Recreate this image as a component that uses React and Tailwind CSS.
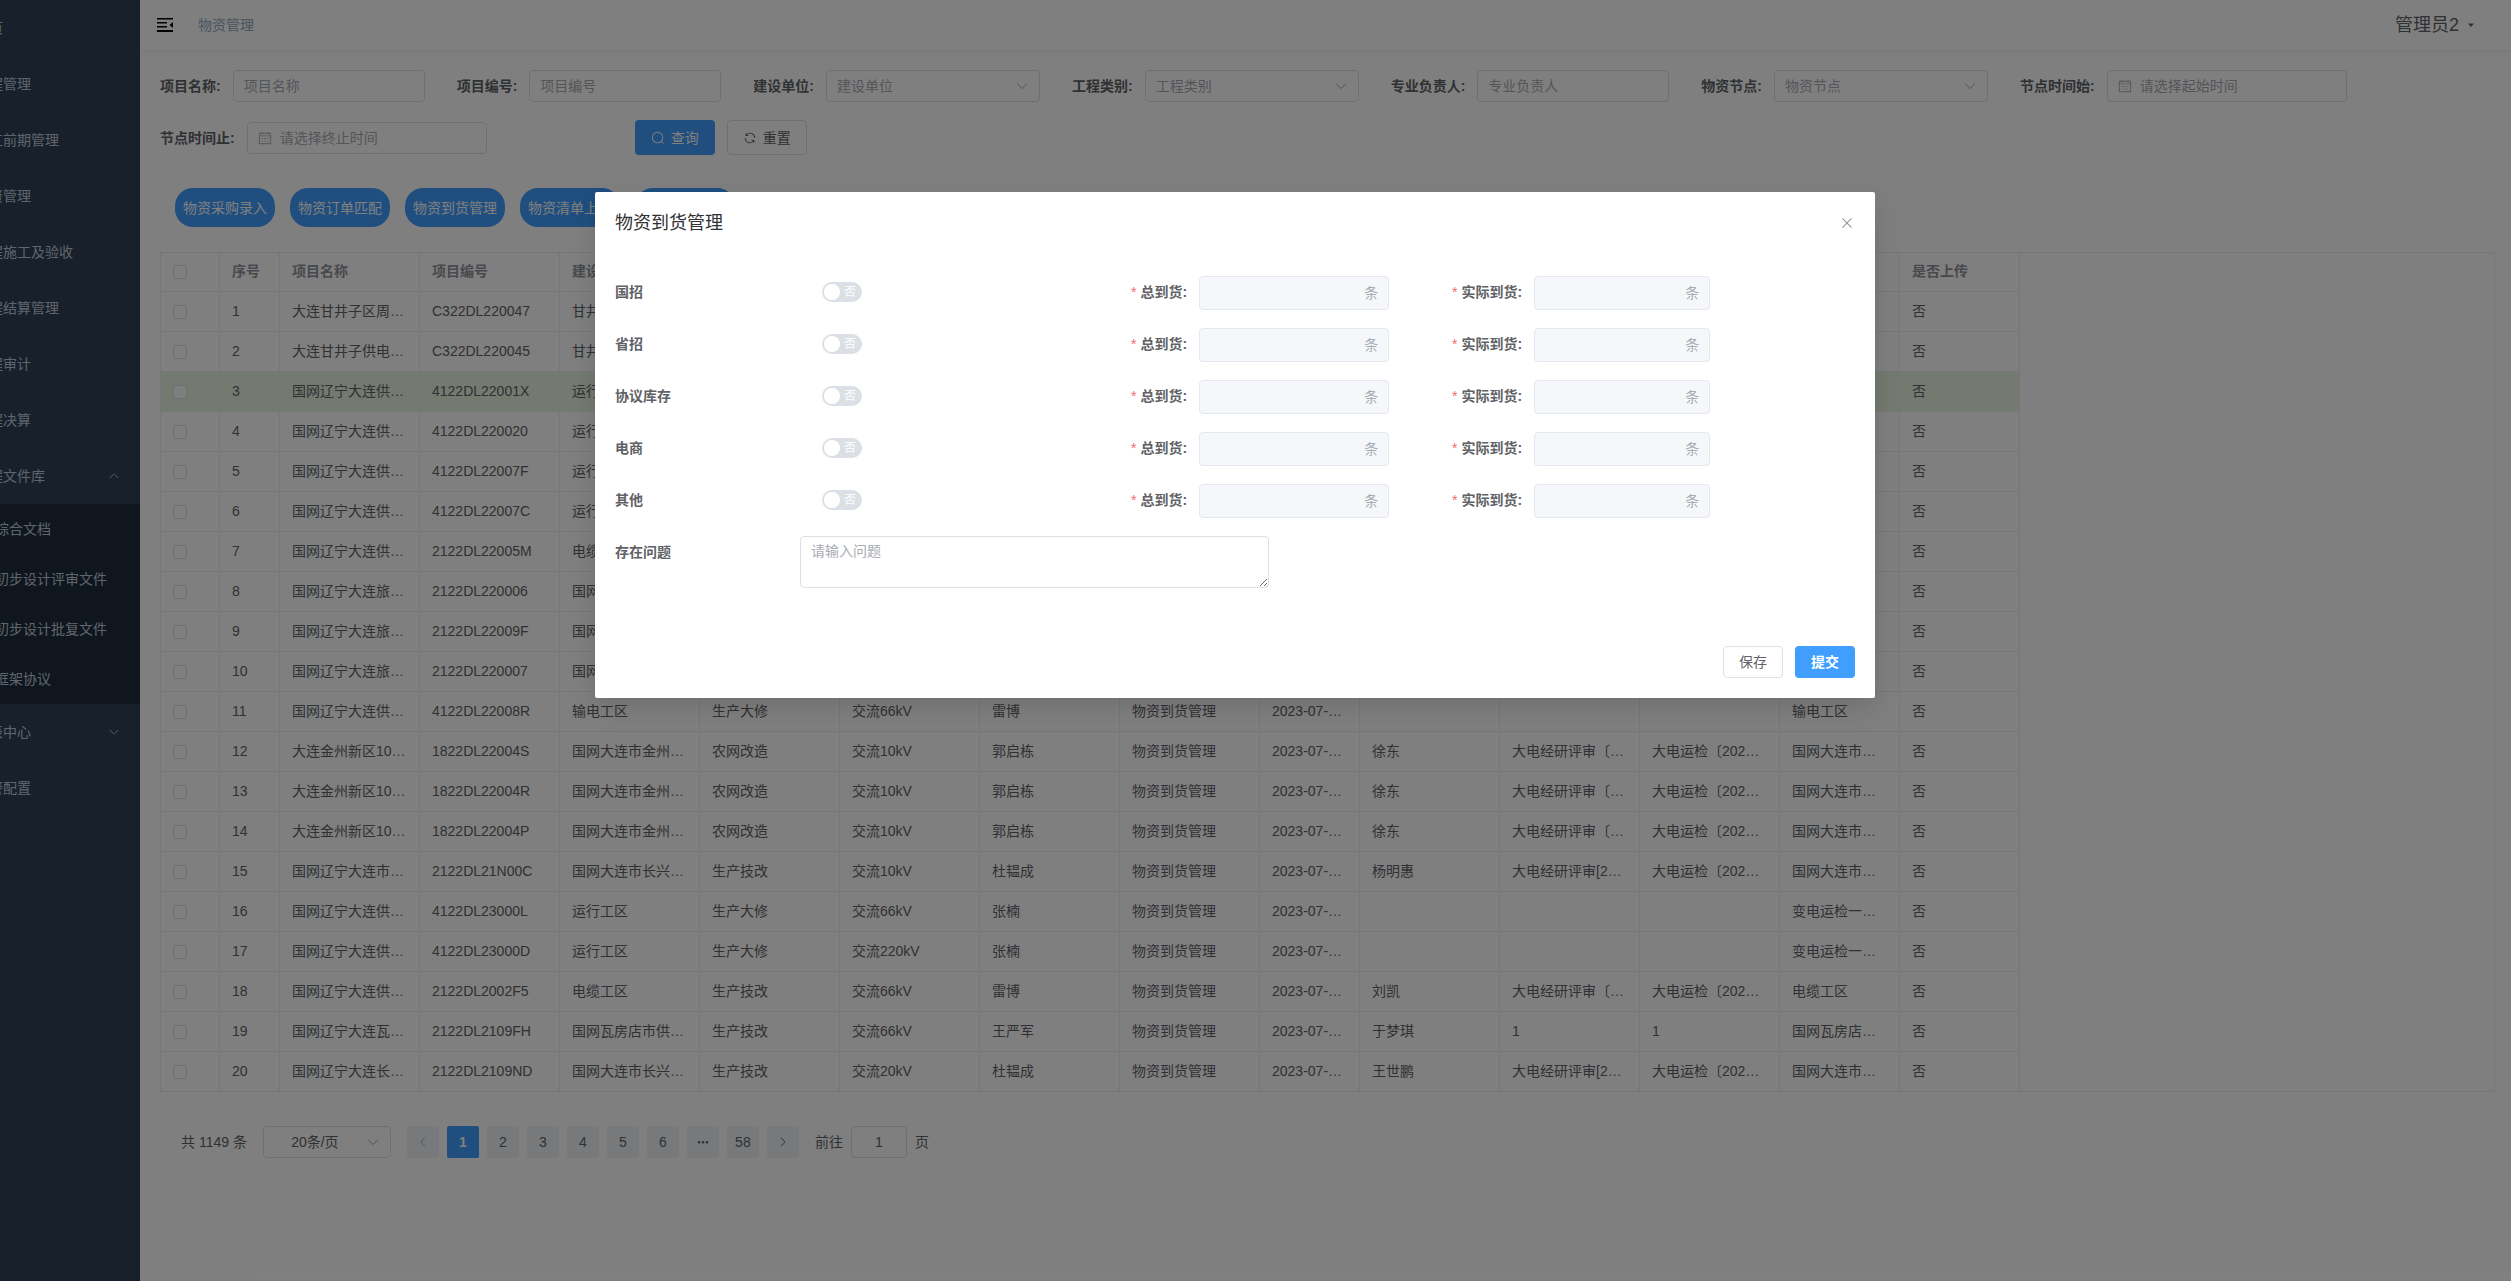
import React from "react";

const CALENDAR =
  "M128 384v512h768V192H768v32a32 32 0 1 1-64 0v-32H320v32a32 32 0 0 1-64 0v-32H128v128h768v64H128zm192-256h384V96a32 32 0 1 1 64 0v32h160a32 32 0 0 1 32 32v768a32 32 0 0 1-32 32H96a32 32 0 0 1-32-32V160a32 32 0 0 1 32-32h160V96a32 32 0 0 1 64 0v32zm-32 384h64a32 32 0 0 1 0 64h-64a32 32 0 0 1 0-64zm0 192h64a32 32 0 1 1 0 64h-64a32 32 0 1 1 0-64zm192-192h64a32 32 0 0 1 0 64h-64a32 32 0 0 1 0-64zm0 192h64a32 32 0 1 1 0 64h-64a32 32 0 1 1 0-64zm192-192h64a32 32 0 1 1 0 64h-64a32 32 0 1 1 0-64zm0 192h64a32 32 0 1 1 0 64h-64a32 32 0 1 1 0-64z";
const SEARCH =
  "m795.904 750.72 124.992 124.928a32 32 0 0 1-45.248 45.248L750.656 795.904a416 416 0 1 1 45.248-45.248zM480 832a352 352 0 1 0 0-704 352 352 0 0 0 0 704z";
const REFRESH =
  "M771.776 794.88A384 384 0 0 1 128 512h64a320 320 0 0 0 555.712 216.448H654.72a32 32 0 1 1 0-64h149.056a32 32 0 0 1 32 32v148.928a32 32 0 1 1-64 0v-50.56zM276.288 295.616h92.992a32 32 0 0 1 0 64H220.16a32 32 0 0 1-32-32V178.56a32 32 0 0 1 64 0v50.56A384 384 0 0 1 896.128 512h-64a320 320 0 0 0-555.776-216.384z";
const ARROW_DOWN =
  "M831.872 340.864 512 652.672 192.128 340.864a30.592 30.592 0 0 0-42.752 0 29.12 29.12 0 0 0 0 41.6L489.664 714.24a32 32 0 0 0 44.672 0l340.288-331.712a29.12 29.12 0 0 0 0-41.728 30.592 30.592 0 0 0-42.752 0z";
const CLOSE =
  "M764.288 214.592 512 466.88 259.712 214.592a31.936 31.936 0 0 0-45.12 45.12L466.752 512 214.528 764.224a31.936 31.936 0 1 0 45.12 45.184L512 557.184l252.288 252.288a31.936 31.936 0 0 0 45.12-45.12L557.12 512.064l252.288-252.352a31.936 31.936 0 1 0-45.12-45.184z";
const CARET = "m256 384 256 288 256-288z";
const MORE =
  "M176 416a112 112 0 1 1 0 224 112 112 0 0 1 0-224m336 0a112 112 0 1 1 0 224 112 112 0 0 1 0-224m336 0a112 112 0 1 1 0 224 112 112 0 0 1 0-224";

function Icon({ d, className }) {
  return (
    <svg viewBox="0 0 1024 1024" fill="currentColor" aria-hidden="true" className={className}>
      <path d={d} />
    </svg>
  );
}

function SideLink({ text, children }) {
  return (
    <a href="#" className="flex h-14 items-center justify-between px-5 whitespace-nowrap">
      {text}
      {children}
    </a>
  );
}

function Sidebar() {
  const top = ["首页", "工程管理", "开工前期管理", "物资管理", "工程施工及验收", "工程结算管理", "工程审计", "工程决算"];
  const sub = ["综合文档", "初步设计评审文件", "初步设计批复文件", "框架协议"];
  return (
    <aside className="w-35 shrink-0 overflow-hidden bg-[#304156] text-[#bfcbd9]">
      <nav className="-ml-[45px] w-[185px]">
        {top.map((t) => (
          <SideLink key={t} text={t} />
        ))}
        <SideLink text="工程文件库">
          <Icon d={ARROW_DOWN} className="size-3 rotate-180" />
        </SideLink>
        <div className="bg-[#1f2d3d]">
          {sub.map((t) => (
            <a key={t} href="#" className="flex h-[50px] items-center pl-10 whitespace-nowrap">
              {t}
            </a>
          ))}
        </div>
        <SideLink text="报表中心">
          <Icon d={ARROW_DOWN} className="size-3" />
        </SideLink>
        <SideLink text="告警配置" />
      </nav>
    </aside>
  );
}

function Field({ id, label, kind, placeholder }) {
  const box = "h-8 rounded border border-[#dcdfe6] bg-white placeholder:text-[#a8abb2]";
  return (
    <div className="flex items-center gap-3">
      <label htmlFor={id} className="font-bold">
        {label}:
      </label>
      {kind === "text" && <input id={id} placeholder={placeholder} className={box + " w-48 px-2.5"} />}
      {kind === "select" && (
        <div className="relative">
          <select id={id} className={box + " w-[214px] appearance-none px-2.5 text-[#a8abb2]"}>
            <option>{placeholder}</option>
          </select>
          <Icon d={ARROW_DOWN} className="pointer-events-none absolute top-[9px] right-[11px] size-3.5 text-[#a8abb2]" />
        </div>
      )}
      {kind === "date" && (
        <div className="relative">
          <input id={id} placeholder={placeholder} className={box + " w-60 pr-[11px] pl-8"} />
          <Icon d={CALENDAR} className="pointer-events-none absolute top-[9px] left-[11px] size-3.5 text-[#a8abb2]" />
        </div>
      )}
    </div>
  );
}

function Filters() {
  return (
    <form className="flex flex-wrap items-center gap-x-8 gap-y-[18px]">
      <Field id="f-name" label="项目名称" kind="text" placeholder="项目名称" />
      <Field id="f-code" label="项目编号" kind="text" placeholder="项目编号" />
      <Field id="f-unit" label="建设单位" kind="select" placeholder="建设单位" />
      <Field id="f-type" label="工程类别" kind="select" placeholder="工程类别" />
      <Field id="f-owner" label="专业负责人" kind="text" placeholder="专业负责人" />
      <Field id="f-node" label="物资节点" kind="select" placeholder="物资节点" />
      <Field id="f-from" label="节点时间始" kind="date" placeholder="请选择起始时间" />
      <Field id="f-to" label="节点时间止" kind="date" placeholder="请选择终止时间" />
      <div className="ml-[116px] flex gap-3">
        <button type="button" className="flex h-[35px] w-20 items-center justify-center gap-1.5 rounded bg-[#409eff] text-white">
          <Icon d={SEARCH} className="size-3.5" />
          查询
        </button>
        <button type="button" className="flex h-[35px] w-20 items-center justify-center gap-1.5 rounded border border-[#dcdfe6]">
          <Icon d={REFRESH} className="size-3.5" />
          重置
        </button>
      </div>
    </form>
  );
}

const HEADERS = [
  "序号", "项目名称", "项目编号", "建设单位", "专业类别", "工程类别", "专业负责人", "物资节点",
  "节点时间", "项目负责人", "评审文号", "批复文号", "申报单位", "是否上传",
];
const WIDTHS = [59, 60, 140, 140, 140, 140, 140, 140, 140, 100, 140, 140, 140, 120, 120];
const JZ = "国网大连市金州…";
const CX = "国网大连市长兴…";
const DL = "国网大连市…";
const GW = "国网辽宁大连供…";
const LS = "国网辽宁大连旅…";
const JZN = "大连金州新区10…";
const PS = "大电经研评审〔…";
const PS2 = "大电经研评审[2…";
const YJ = "大电运检〔202…";
const NODE = "物资到货管理";
const DATE = "2023-07-…";
const brief = (name, code, unit) => [name, code, unit, "", "", "", "", "", "", "", "", ""];
const ROWS = [
  brief("大连甘井子区周…", "C322DL220047", "甘井子"),
  brief("大连甘井子供电…", "C322DL220045", "甘井子"),
  brief(GW, "4122DL22001X", "运行工区"),
  brief(GW, "4122DL220020", "运行工区"),
  brief(GW, "4122DL22007F", "运行工区"),
  brief(GW, "4122DL22007C", "运行工区"),
  brief(GW, "2122DL22005M", "电缆工区"),
  brief(LS, "2122DL220006", DL),
  brief(LS, "2122DL22009F", DL),
  brief(LS, "2122DL220007", DL),
  [GW, "4122DL22008R", "输电工区", "生产大修", "交流66kV", "雷博", NODE, DATE, "", "", "", "输电工区"],
  [JZN, "1822DL22004S", JZ, "农网改造", "交流10kV", "郭启栋", NODE, DATE, "徐东", PS, YJ, DL],
  [JZN, "1822DL22004R", JZ, "农网改造", "交流10kV", "郭启栋", NODE, DATE, "徐东", PS, YJ, DL],
  [JZN, "1822DL22004P", JZ, "农网改造", "交流10kV", "郭启栋", NODE, DATE, "徐东", PS, YJ, DL],
  ["国网辽宁大连市…", "2122DL21N00C", CX, "生产技改", "交流10kV", "杜韫成", NODE, DATE, "杨明惠", PS2, YJ, DL],
  [GW, "4122DL23000L", "运行工区", "生产大修", "交流66kV", "张楠", NODE, DATE, "", "", "", "变电运检一…"],
  [GW, "4122DL23000D", "运行工区", "生产大修", "交流220kV", "张楠", NODE, DATE, "", "", "", "变电运检一…"],
  [GW, "2122DL2002F5", "电缆工区", "生产技改", "交流66kV", "雷博", NODE, DATE, "刘凯", PS, YJ, "电缆工区"],
  ["国网辽宁大连瓦…", "2122DL2109FH", "国网瓦房店市供…", "生产技改", "交流66kV", "王严军", NODE, DATE, "于梦琪", "1", "1", "国网瓦房店…"],
  ["国网辽宁大连长…", "2122DL2109ND", CX, "生产技改", "交流20kV", "杜韫成", NODE, DATE, "王世鹏", PS2, YJ, DL],
];

function Tick({ label }) {
  return (
    <input
      type="checkbox"
      aria-label={label}
      className="block size-3.5 appearance-none rounded-xs border border-[#dcdfe6] bg-white"
    />
  );
}

function DataTable() {
  return (
    <div className="border border-[#ebeef5]">
      <table className="w-[1859px] table-fixed border-separate border-spacing-0">
        <colgroup>
          {WIDTHS.map((w, i) => (
            <col key={i} style={{ width: w }} />
          ))}
        </colgroup>
        <thead className="text-left text-[#909399]">
          <tr>
            <th className="h-[39px] border-r border-b border-[#ebeef5] px-3">
              <Tick label="全选" />
            </th>
            {HEADERS.map((h) => (
              <th key={h} className="h-[39px] truncate border-r border-b border-[#ebeef5] px-3 pb-0.5 font-bold">
                {h}
              </th>
            ))}
          </tr>
        </thead>
        <tbody className="[&>tr:last-child>td]:h-[39px] [&>tr:last-child>td]:border-b-0">
          {ROWS.map((row, r) => (
            <tr key={r} className={r === 2 ? "bg-[#e9f5e1]" : ""}>
              <td className="h-10 border-r border-b border-[#ebeef5] px-3">
                <Tick label={"选择第" + (r + 1) + "行"} />
              </td>
              {[r + 1, ...row, "否"].map((c, i) => (
                <td key={i} className="h-10 truncate border-r border-b border-[#ebeef5] px-3 pb-0.5">
                  {c}
                </td>
              ))}
            </tr>
          ))}
        </tbody>
      </table>
    </div>
  );
}

function Pagination() {
  const btn = "flex size-8 items-center justify-center rounded-xs bg-[#f0f2f5]";
  return (
    <div className="mt-[34px] flex items-center px-[21px]">
      <span>共 1149 条</span>
      <div className="relative ml-4">
        <select aria-label="每页条数" className="h-8 w-32 appearance-none rounded border border-[#dcdfe6] bg-white pr-6 text-center">
          <option>20条/页</option>
        </select>
        <Icon d={ARROW_DOWN} className="pointer-events-none absolute top-[9px] right-[11px] size-3.5 text-[#a8abb2]" />
      </div>
      <div className="ml-4 flex gap-2">
        <button aria-label="上一页" className={btn + " text-[#a8abb2]"}>
          <Icon d={ARROW_DOWN} className="size-3 rotate-90" />
        </button>
        <button className="size-8 rounded-xs bg-[#409eff] font-bold text-white">1</button>
        {["2", "3", "4", "5", "6"].map((n) => (
          <button key={n} className={btn}>
            {n}
          </button>
        ))}
        <button aria-label="更多页" className={btn}>
          <Icon d={MORE} className="size-3" />
        </button>
        <button className={btn}>58</button>
        <button aria-label="下一页" className={btn}>
          <Icon d={ARROW_DOWN} className="size-3 -rotate-90" />
        </button>
      </div>
      <label htmlFor="goto" className="ml-4">
        前往
      </label>
      <input id="goto" defaultValue="1" className="mx-2 h-8 w-14 rounded border border-[#dcdfe6] bg-white text-center" />
      <span>页</span>
    </div>
  );
}

function Amount({ id, label, width }) {
  return (
    <div className="flex gap-3">
      <label htmlFor={id} className="flex h-8 items-center font-bold">
        <span className="mr-1 font-normal text-[#f56c6c]">*</span>
        {label}:
      </label>
      <div className="relative">
        <input id={id} disabled className={"block h-[34px] rounded border border-[#e4e7ed] bg-[#f5f7fa] pr-8 pl-[11px] " + width} />
        <span className="pointer-events-none absolute inset-y-0 right-[11px] flex items-center text-[#a8abb2]">条</span>
      </div>
    </div>
  );
}

function Switch({ label }) {
  return (
    <label className="relative flex h-5 w-10 items-center justify-end rounded-full bg-[#dcdfe6] pr-1.5 text-xs text-white">
      <input type="checkbox" role="switch" aria-label={label} className="absolute left-0.5 size-4 appearance-none rounded-full bg-white" />
      否
    </label>
  );
}

function Dialog() {
  const items = ["国招", "省招", "协议库存", "电商", "其他"];
  return (
    <div className="absolute inset-0 flex items-start justify-center bg-black/50 pt-48 pr-[41px]">
      <div
        role="dialog"
        aria-labelledby="dlg-title"
        className="w-[1280px] rounded-xs bg-white p-5 shadow-[0_12px_32px_4px_rgba(0,0,0,0.04),0_8px_20px_rgba(0,0,0,0.08)]"
      >
        <div className="flex items-center justify-between">
          <h2 id="dlg-title" className="text-lg leading-[22px] text-[#303133]">
            物资到货管理
          </h2>
          <button aria-label="关闭" className="text-[#909399]">
            <Icon d={CLOSE} className="size-4" />
          </button>
        </div>
        <div className="mt-[42px] flex flex-col gap-[18px]">
          {items.map((name, i) => (
            <div key={name} className="grid grid-cols-[207px_309px_321px_1fr]">
              <span className="flex h-8 items-center font-bold">{name}</span>
              <div className="flex h-8 items-center">
                <Switch label={name} />
              </div>
              <Amount id={"total-" + i} label="总到货" width="w-[190px]" />
              <Amount id={"actual-" + i} label="实际到货" width="w-44" />
            </div>
          ))}
          <div className="flex">
            <label htmlFor="issue" className="flex h-8 w-[185px] items-center font-bold">
              存在问题
            </label>
            <textarea
              id="issue"
              placeholder="请输入问题"
              className="h-[52px] w-[469px] rounded border border-[#dcdfe6] px-2.5 py-1 leading-5 placeholder:text-[#a8abb2]"
            />
          </div>
        </div>
        <div className="mt-[58px] flex justify-end gap-3">
          <button className="h-8 w-15 rounded border border-[#dcdfe6]">保存</button>
          <button className="h-8 w-15 rounded bg-[#409eff] font-bold text-white">提交</button>
        </div>
      </div>
    </div>
  );
}

export default function App() {
  const actions = ["物资采购录入", "物资订单匹配", "物资到货管理", "物资清单上传", "物资信息导出"];
  return (
    <div className="relative flex min-h-screen bg-white font-['Liberation_Sans','Noto_Sans_CJK_SC',sans-serif] text-sm text-[#606266]">
      <Sidebar />
      <div className="min-w-0 flex-1">
        <header className="flex h-[50px] items-center pr-[34px] pl-4 shadow-[0_1px_4px_rgba(0,21,41,0.08)]">
          <button aria-label="收起菜单">
            <svg viewBox="0 0 18 16" className="h-4 w-[18px]" fill="#000" aria-hidden="true">
              <path d="M1 1h16v1.500H1zM1 5h10v1.500H1zM1 9h10v1.500H1zM1 13h16v2H1zM17 5v6L13.500 8z" />
            </svg>
          </button>
          <span className="ml-6 text-[#97a8be]">物资管理</span>
          <button className="ml-auto flex items-center gap-1.5 text-lg leading-5">
            管理员2
            <Icon d={CARET} className="size-3" />
          </button>
        </header>
        <main className="pt-5 pr-4 pl-5">
          <Filters />
          <div className="mt-[33px] mb-[25px] flex gap-[15px] pl-[15px]">
            {actions.map((a) => (
              <button key={a} className="h-[39px] w-25 rounded-[18px] bg-[#409eff] text-white">
                {a}
              </button>
            ))}
          </div>
          <DataTable />
          <Pagination />
        </main>
      </div>
      <Dialog />
    </div>
  );
}
